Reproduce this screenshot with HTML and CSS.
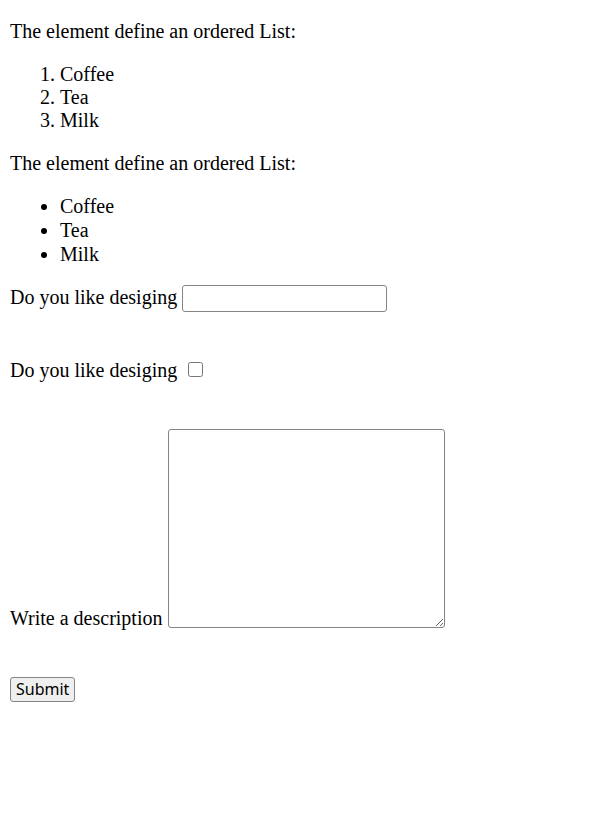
FILE: index.html
```html
<!DOCTYPE html>
<html>
<head>
<meta charset="utf-8">
<link rel="stylesheet" href="styles.css">
</head>
<body class="page">
<p class="para first">The element define an ordered List:</p>
<ol class="list">
<li>Coffee</li>
<li>Tea</li>
<li>Milk</li>
</ol>
<p class="para before-bullets">The element define an ordered List:</p>
<ul class="list bullets">
<li>Coffee</li>
<li>Tea</li>
<li>Milk</li>
</ul>
<form class="form">
<label class="lbl">Do you like desiging</label> <input class="text-input" type="text"><br><br><br>
<label class="lbl">Do you like desiging</label> <input class="check" type="checkbox"><br><br><br>
<label class="lbl">Write a description</label> <textarea class="area"></textarea>
<button class="btn" type="button">Submit</button>
</form>
</body>
</html>
```
FILE: styles.css
```css
html { background: #fff; }
.page {
  margin: 0;
  padding: 0 10px 10px;
  font-family: "Liberation Serif", "Times New Roman", serif;
  font-size: 20px;
  color: #000;
}
.para { margin: 20px 0; }
.first { margin-top: 20px; }
.before-bullets { margin-bottom: 19px; }
.list { margin: 20px 0; padding-left: 50px; }
.bullets { margin-top: 19px; }
.bullets li { line-height: 24px; }
.form { margin: -1px 0 0; }
.text-input {
  box-sizing: border-box;
  width: 205px;
  height: 27px;
  margin: 0;
  padding: 1px 3px;
  border: 1px solid #858585;
  border-radius: 3px;
  font-size: 16px;
  font-family: "Liberation Sans", Arial, sans-serif;
  vertical-align: baseline;
}
.check {
  width: 15px;
  height: 15px;
  margin: 4px 4px 0 6px;
  vertical-align: baseline;
}
.area {
  box-sizing: border-box;
  width: 277px;
  height: 199px;
  margin: 1px 0 1px 1px;
  padding: 2px;
  border: 1px solid #858585;
  border-radius: 3px;
  vertical-align: text-bottom;
}
.btn {
  display: block;
  box-sizing: border-box;
  height: 25px;
  margin: 47px 0 0;
  padding: 0 5px;
  background: #efefef;
  border: 1px solid #858585;
  border-radius: 3px;
  font-family: "Noto Sans", "DejaVu Sans", sans-serif;
  font-size: 16px;
  line-height: 21px;
  color: #000;
}
```
